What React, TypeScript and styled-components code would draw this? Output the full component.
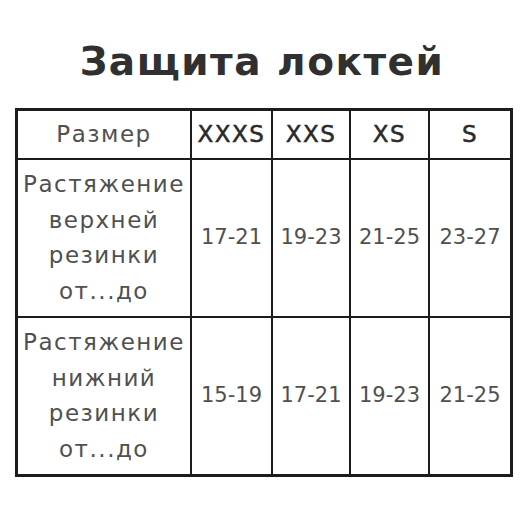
import React from "react";
import styled, { createGlobalStyle } from "styled-components";

const Global = createGlobalStyle`
  html, body { margin: 0; padding: 0; background: #ffffff; }
  body { width: 524px; height: 524px; overflow: hidden; }
`;

const Page = styled.div`
  width: 524px;
  height: 524px;
  box-sizing: border-box;
  padding-top: 36px;
  display: flex;
  flex-direction: column;
  align-items: center;
  font-family: "DejaVu Sans", "Noto Sans", sans-serif;
`;

const Title = styled.h1`
  margin: 0;
  height: 72px;
  font-size: 39px;
  line-height: 52px;
  font-weight: 700;
  color: #303030;
  letter-spacing: 1.5px;
  text-align: center;
`;

const Grid = styled.div`
  display: grid;
  grid-template-columns: 172px 79px 76px 77px 80px;
  grid-template-rows: 47px 156px 156px;
  gap: 2px;
  background: #1c1c1c;
  border: 3px solid #1c1c1c;
  margin-left: 4px;
`;

type Kind = "label" | "head" | "num";

const Cell = styled.div<{ $kind: Kind }>`
  background: #ffffff;
  display: flex;
  align-items: center;
  justify-content: center;
  text-align: center;
  font-size: ${(p) => (p.$kind === "num" ? "21px" : "23px")};
  line-height: 35.5px;
  letter-spacing: ${(p) => (p.$kind === "num" ? "0px" : "1.5px")};
  font-weight: 400;
  color: ${(p) => (p.$kind === "head" ? "#2a2a2a" : "#505050")};
  -webkit-text-stroke: ${(p) => (p.$kind === "head" ? "0.5px #2a2a2a" : "0")};
  white-space: pre-line;
`;

const sizes = ["XXXS", "XXS", "XS", "S"];
const rows = [
  { label: "Растяжение\nверхней\nрезинки\nот...до", values: ["17-21", "19-23", "21-25", "23-27"] },
  { label: "Растяжение\nнижний\nрезинки\nот...до", values: ["15-19", "17-21", "19-23", "21-25"] },
];

export default function App() {
  return (
    <Page>
      <Global />
      <Title>Защита локтей</Title>
      <Grid>
        <Cell $kind="label">Размер</Cell>
        {sizes.map((s) => (
          <Cell key={s} $kind="head">
            {s}
          </Cell>
        ))}
        {rows.map((r) => (
          <React.Fragment key={r.label}>
            <Cell $kind="label">{r.label}</Cell>
            {r.values.map((v, i) => (
              <Cell key={i} $kind="num">
                {v}
              </Cell>
            ))}
          </React.Fragment>
        ))}
      </Grid>
    </Page>
  );
}
